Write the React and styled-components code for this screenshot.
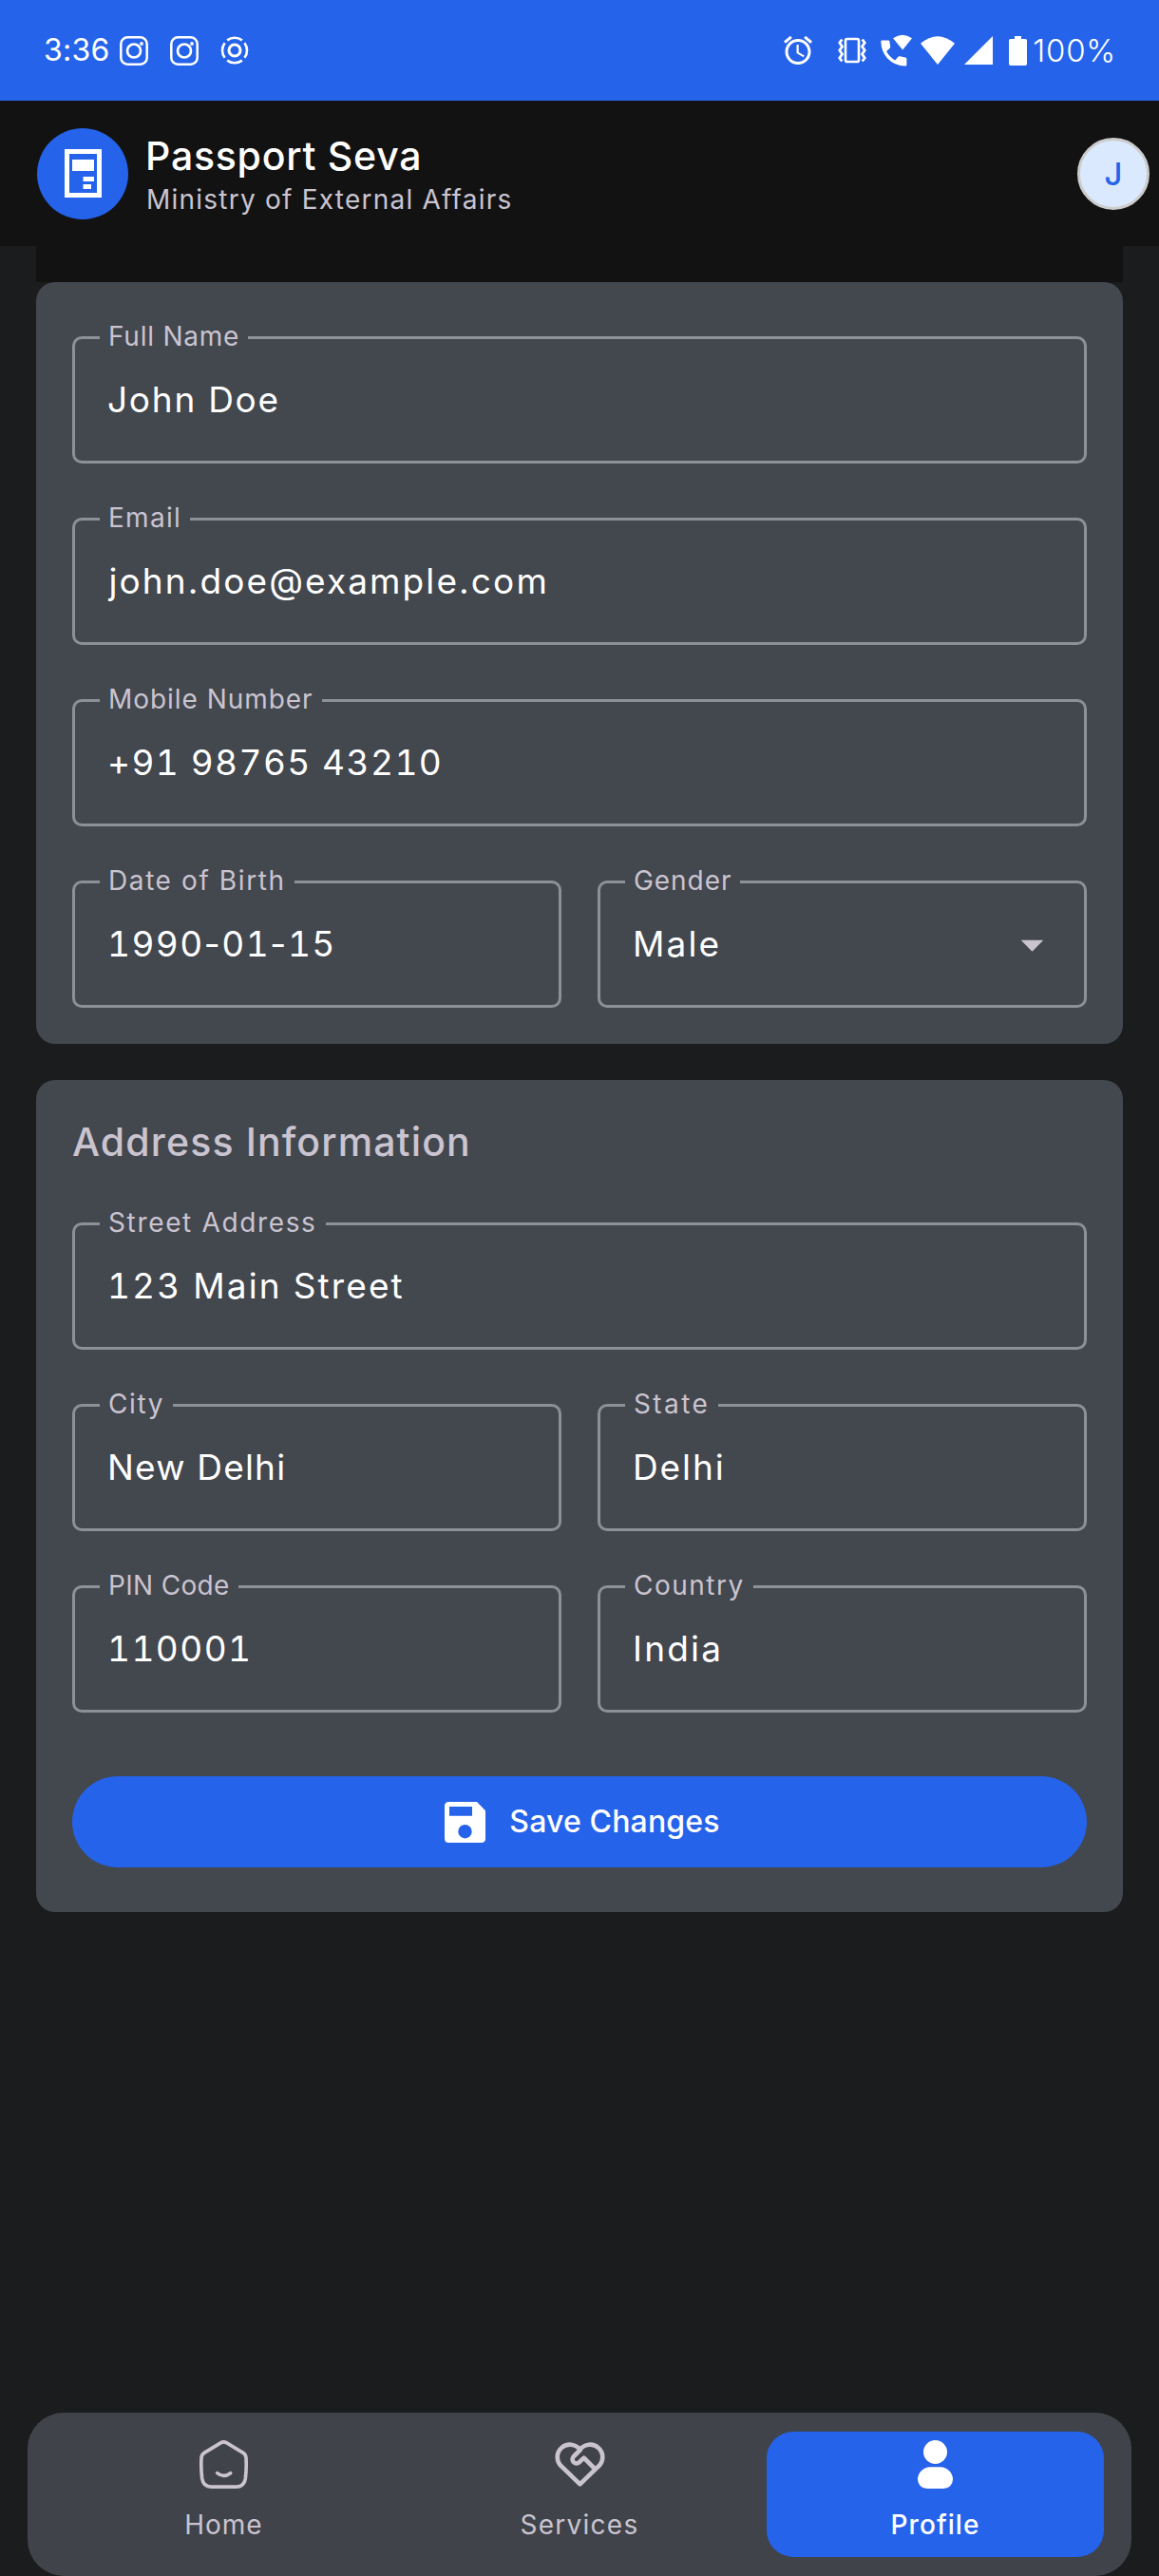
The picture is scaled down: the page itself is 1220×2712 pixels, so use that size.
import React from 'react';
import styled, { createGlobalStyle } from 'styled-components';
import { MdAlarm, MdArrowDropDown } from 'react-icons/md';

const color = {
  primary: '#2563eb',
  background: '#1a1c1e',
  header: '#121212',
  surface: '#43474e',
  nav: '#40434a',
  outline: '#8c9199',
  muted: '#cac4d0',
  white: '#ffffff',
};

const GlobalStyle = createGlobalStyle`
  * { box-sizing: border-box; }
  body {
    margin: 0;
    background: ${color.background};
    font-family: Inter, Roboto, sans-serif;
    color: ${color.white};
  }
`;

const Screen = styled.div`
  width: 1220px;
  height: 2712px;
  display: flex;
  flex-direction: column;
  background: ${color.background};
  overflow: hidden;
`;

/* Status bar */
const StatusBar = styled.div`
  height: 106px;
  flex: none;
  display: flex;
  align-items: center;
  justify-content: space-between;
  padding: 0 45px 0 46px;
  background: ${color.primary};
`;

const StatusGroup = styled.div`
  display: flex;
  align-items: center;
`;

const StatusText = styled.span`
  font-size: ${(p) => p.$size}px;
  font-weight: ${(p) => p.$weight};
  letter-spacing: ${(p) => p.$track}px;
  line-height: 40px;
  white-space: nowrap;
`;

const StatusIcon = styled.span`
  display: flex;
  align-items: center;
  margin-left: ${(p) => p.$gap}px;
  svg { display: block; }
`;

/* Header */
const Header = styled.header`
  height: 153px;
  flex: none;
  display: flex;
  align-items: center;
  padding: 0 10px 0 39px;
  background: ${color.header};
`;

const Logo = styled.div`
  width: 96px;
  height: 96px;
  border-radius: 50%;
  background: ${color.primary};
  display: flex;
  align-items: center;
  justify-content: center;
`;

const Brand = styled.div`
  flex: 1;
  display: flex;
  flex-direction: column;
  margin-left: 18px;
`;

const BrandTitle = styled.h1`
  margin: 0;
  font-size: 41px;
  font-weight: 550;
  line-height: 54px;
  letter-spacing: 0.75px;
`;

const BrandSubtitle = styled.p`
  margin: 0;
  padding-left: 1px;
  font-size: 28px;
  line-height: 38px;
  letter-spacing: 1.23px;
  color: ${color.muted};
`;

const Avatar = styled.div`
  width: 76px;
  height: 76px;
  border-radius: 50%;
  border: 3px solid #cccccc;
  background: #dbe9fe;
  color: ${color.primary};
  font-size: 33px;
  font-weight: 500;
  display: flex;
  align-items: center;
  justify-content: center;
`;

/* Form */
const Content = styled.main`
  flex: 1;
  padding: 0 38px;
  display: flex;
  flex-direction: column;
`;

const TabStrip = styled.div`
  height: 38px;
  background: ${color.header};
`;

const Card = styled.section`
  background: ${color.surface};
  border-radius: 20px;
  padding: ${(p) => p.$padding};
  margin-bottom: 38px;
`;

const CardTitle = styled.h2`
  margin: 0 0 57px;
  font-size: 41px;
  font-weight: 500;
  line-height: 56px;
  letter-spacing: 1.12px;
  color: ${color.muted};
`;

const Fields = styled.div`
  display: flex;
  flex-direction: column;
  gap: 57px;
`;

const FieldRow = styled.div`
  display: grid;
  grid-template-columns: 1fr 1fr;
  gap: 38px;
`;

const FieldBox = styled.fieldset`
  margin: 0;
  min-width: 0;
  height: 134px;
  padding: 0 26px;
  border: 3px solid ${color.outline};
  border-radius: 10px;
`;

const FieldLabel = styled.legend`
  height: 3px;
  padding: 0 9px 0 9px;
  font-size: 28px;
  line-height: 3px;
  letter-spacing: ${(p) => p.$track}px;
  color: ${color.muted};
  white-space: nowrap;
  span { position: relative; top: -1px; }
`;

const FieldBody = styled.div`
  height: 128px;
  display: flex;
  align-items: center;
  justify-content: space-between;
  padding-left: ${(p) => p.$inset}px;
`;

const FieldValue = styled.span`
  font-size: 37px;
  line-height: 48px;
  letter-spacing: ${(p) => p.$track}px;
  font-variant-numeric: ${(p) => (p.$numeric ? 'tabular-nums' : 'normal')};
  white-space: nowrap;
`;

const DateDash = styled.span`
  margin: 0 -3.4px;
`;

const SaveButton = styled.button`
  width: 100%;
  height: 96px;
  margin-top: 67px;
  padding: 0 0 0 6px;
  border: 0;
  border-radius: 48px;
  background: ${color.primary};
  color: ${color.white};
  font: 550 32px/40px Inter, Roboto, sans-serif;
  letter-spacing: 0.15px;
  display: flex;
  align-items: center;
  justify-content: center;
  gap: 25px;
`;

/* Bottom navigation */
const NavBar = styled.nav`
  height: 172px;
  flex: none;
  margin: 0 29px;
  padding: 20px 29px;
  border-radius: 38px;
  background: ${color.nav};
  display: grid;
  grid-template-columns: repeat(3, 355px);
  justify-content: space-between;
`;

const NavItem = styled.a`
  display: flex;
  flex-direction: column;
  align-items: center;
  padding-top: 6px;
  border-radius: 28px;
  background: ${(p) => (p.$active ? color.primary : 'transparent')};
  color: ${(p) => (p.$active ? color.white : color.muted)};
  font-size: 28px;
  font-weight: ${(p) => (p.$active ? 550 : 400)};
  letter-spacing: ${(p) => p.$track}px;
  line-height: 36px;
  svg { display: block; margin-bottom: 17px; }
`;

const CameraIcon = () => (
  <svg width="30" height="31" viewBox="0 0 30 31" fill="none" stroke="currentColor">
    <rect x="1.3" y="1.3" width="27.4" height="28.4" rx="7" strokeWidth="2.5" />
    <circle cx="15" cy="15.5" r="7" strokeWidth="2.7" />
    <circle cx="23" cy="8" r="1.9" fill="currentColor" stroke="none" />
  </svg>
);

const TargetIcon = () => (
  <svg width="30" height="30" viewBox="0 0 30 30" fill="none" stroke="currentColor" strokeWidth="2.6">
    <circle cx="15" cy="15" r="6" strokeWidth="3.1" />
    <path d="M7.2 4.4A13 13 0 0 1 22.8 4.4" />
    <path d="M25.4 7.2A13 13 0 0 1 25.4 22.8" />
    <path d="M22.8 25.6A13 13 0 0 1 7.2 25.6" />
    <path d="M4.6 22.8A13 13 0 0 1 4.6 7.2" />
  </svg>
);

const VibrateIcon = () => (
  <svg width="32" height="28" viewBox="0 0 32 28" fill="none" stroke="currentColor" strokeWidth="2.6">
    <rect x="9" y="2" width="14" height="24" rx="1.8" />
    <path d="M5.3 2.5 2.8 6l2.7 4-2.7 4 2.7 4-2.7 4 2.5 3.5" strokeWidth="2.8" />
    <path d="M26.7 2.5 29.2 6l-2.7 4 2.7 4-2.7 4 2.7 4-2.5 3.5" strokeWidth="2.8" />
  </svg>
);

const WifiCallIcon = () => (
  <svg width="34" height="34" viewBox="0 0 34 34" fill="currentColor">
    <path d="M13 4.2Q23 -2.8 33 4.2L23.2 16.4Z" />
    <path d="M1.5 6.5H8.2Q9.2 6.5 9.4 7.5L10.2 13.2Q10.3 14 9.7 14.7L6.1 18Q9.3 24.2 15.2 27.4L18.7 23.6Q19.3 23 20.2 23.2L26.2 24.5Q27.4 24.8 27.4 26V32.3Q27.4 33.6 26 33.6Q14.4 33.2 6.9 25.2Q.6 18.2 .3 7.8Q.3 6.5 1.5 6.5Z" />
  </svg>
);

const WifiIcon = () => (
  <svg width="36" height="30" viewBox="0 0 36 30" fill="currentColor">
    <path d="M0 7.8Q18 -7.5 36 7.8L18 30Z" />
  </svg>
);

const SignalIcon = () => (
  <svg width="30" height="30" viewBox="0 0 30 30" fill="currentColor">
    <path d="M30 0V30H0Z" />
  </svg>
);

const BatteryIcon = () => (
  <svg width="19" height="31" viewBox="0 0 19 31" fill="currentColor">
    <path d="M6 0h7v3h4.2Q19 3 19 4.8v24.4Q19 31 17.2 31H1.8Q0 31 0 29.2V4.8Q0 3 1.8 3H6Z" />
  </svg>
);

const PassportIcon = () => (
  <svg width="39" height="51" viewBox="0 0 39 51" fill="currentColor">
    <path fillRule="evenodd" d="M0 0h39v51H0ZM5 5v41h29V5Z" />
    <path d="M8 11h23v12H8ZM19.5 29H31v5H19.5ZM19.5 37h8.5v5h-8.5Z" />
  </svg>
);

const SaveIcon = () => (
  <svg width="43" height="43" viewBox="0 0 43 43" fill="currentColor">
    <path
      fillRule="evenodd"
      d="M4.5 0H34L43 9.2V38.5Q43 43 38.5 43H4.5Q0 43 0 38.5V4.5Q0 0 4.5 0ZM5 5V14.8H29V5ZM21.5 24A7.2 7.2 0 1 0 21.5 38.4A7.2 7.2 0 1 0 21.5 24Z"
    />
  </svg>
);

const HomeIcon = () => (
  <svg width="57" height="57" viewBox="621 138 171 171" fill="none" stroke="currentColor" strokeWidth="11" strokeLinecap="round">
    <path d="M698 155Q706 150 715 155L768 187Q776 192 777 203Q779 235 775 268Q771 294.5 746 294.5H667Q642 294.5 638 268Q634 235 636 203Q637 192 645 187Z" />
    <path d="M686 251Q706 267 728 251" />
  </svg>
);

const CareIcon = () => (
  <svg width="57" height="57" viewBox="543 138 171 171" fill="none" stroke="currentColor" strokeWidth="14" strokeLinejoin="round">
    <path d="M628.5 177A39.5 39.5 0 1 0 570.5 230L628.5 286L686.5 230A39.5 39.5 0 1 0 628.5 177Z" />
    <path d="M631 176L609 198A12 12 0 0 0 626 217L641 203L675 237" />
  </svg>
);

const PersonIcon = () => (
  <svg width="57" height="57" viewBox="468 138 171 171" fill="currentColor">
    <circle cx="553.5" cy="184.5" r="37.5" />
    <path d="M538 232H569A40 40 0 0 1 609 271A29 29 0 0 1 580 300H527A29 29 0 0 1 498 271A40 40 0 0 1 538 232Z" />
  </svg>
);

const Field = ({ label, labelTrack, value, track, inset = 8, numeric, children }) => (
  <FieldBox>
    <FieldLabel $track={labelTrack}>
      <span>{label}</span>
    </FieldLabel>
    <FieldBody $inset={inset}>
      <FieldValue $track={track} $numeric={numeric}>{value}</FieldValue>
      {children}
    </FieldBody>
  </FieldBox>
);

export default function App() {
  return (
    <Screen>
      <GlobalStyle />
      <StatusBar>
        <StatusGroup>
          <StatusText $size={32} $weight={400} $track={0.25}>3:36</StatusText>
          <StatusIcon $gap={10}><CameraIcon /></StatusIcon>
          <StatusIcon $gap={23}><CameraIcon /></StatusIcon>
          <StatusIcon $gap={23}><TargetIcon /></StatusIcon>
        </StatusGroup>
        <StatusGroup>
          <StatusIcon $gap={0}><MdAlarm size={36} /></StatusIcon>
          <StatusIcon $gap={23}><VibrateIcon /></StatusIcon>
          <StatusIcon $gap={14}><WifiCallIcon /></StatusIcon>
          <StatusIcon $gap={8}><WifiIcon /></StatusIcon>
          <StatusIcon $gap={10}><SignalIcon /></StatusIcon>
          <StatusIcon $gap={17}><BatteryIcon /></StatusIcon>
          <StatusIcon $gap={6}>
            <StatusText $size={33} $weight={300} $track={0.75}>100%</StatusText>
          </StatusIcon>
        </StatusGroup>
      </StatusBar>

      <Header>
        <Logo><PassportIcon /></Logo>
        <Brand>
          <BrandTitle>Passport Seva</BrandTitle>
          <BrandSubtitle>Ministry of External Affairs</BrandSubtitle>
        </Brand>
        <Avatar>J</Avatar>
      </Header>

      <Content>
        <TabStrip />
        <Card $padding="57px 38px 38px">
          <Fields>
            <Field label="Full Name" labelTrack={0.76} value="John Doe" track={1.74} />
            <Field label="Email" labelTrack={1.28} value="john.doe@example.com" track={2.1} inset={9.5} />
            <Field label="Mobile Number" labelTrack={0.95} value="+91 98765 43210" track={1.43} numeric />
            <FieldRow>
              <Field
                label="Date of Birth"
                labelTrack={1.6}
                value={<>1990<DateDash>-</DateDash>01<DateDash>-</DateDash>15</>}
                track={1.43}
                numeric
              />
              <Field label="Gender" labelTrack={0.95} value="Male" track={2.1}>
                <MdArrowDropDown size={57} color={color.muted} />
              </Field>
            </FieldRow>
          </Fields>
        </Card>

        <Card $padding="37px 38px 47px">
          <CardTitle>Address Information</CardTitle>
          <Fields>
            <Field label="Street Address" labelTrack={1.65} value="123 Main Street" track={2.1} numeric />
            <FieldRow>
              <Field label="City" labelTrack={1.6} value="New Delhi" track={1.2} />
              <Field label="State" labelTrack={2.4} value="Delhi" track={1.9} />
            </FieldRow>
            <FieldRow>
              <Field label="PIN Code" labelTrack={0.32} value="110001" track={1.43} numeric />
              <Field label="Country" labelTrack={1.5} value="India" track={2.2} />
            </FieldRow>
          </Fields>
          <SaveButton><SaveIcon />Save Changes</SaveButton>
        </Card>
      </Content>

      <NavBar>
        <NavItem $track={0.96}><HomeIcon />Home</NavItem>
        <NavItem $track={1.27}><CareIcon />Services</NavItem>
        <NavItem $track={1.1} $active><PersonIcon />Profile</NavItem>
      </NavBar>
    </Screen>
  );
}
